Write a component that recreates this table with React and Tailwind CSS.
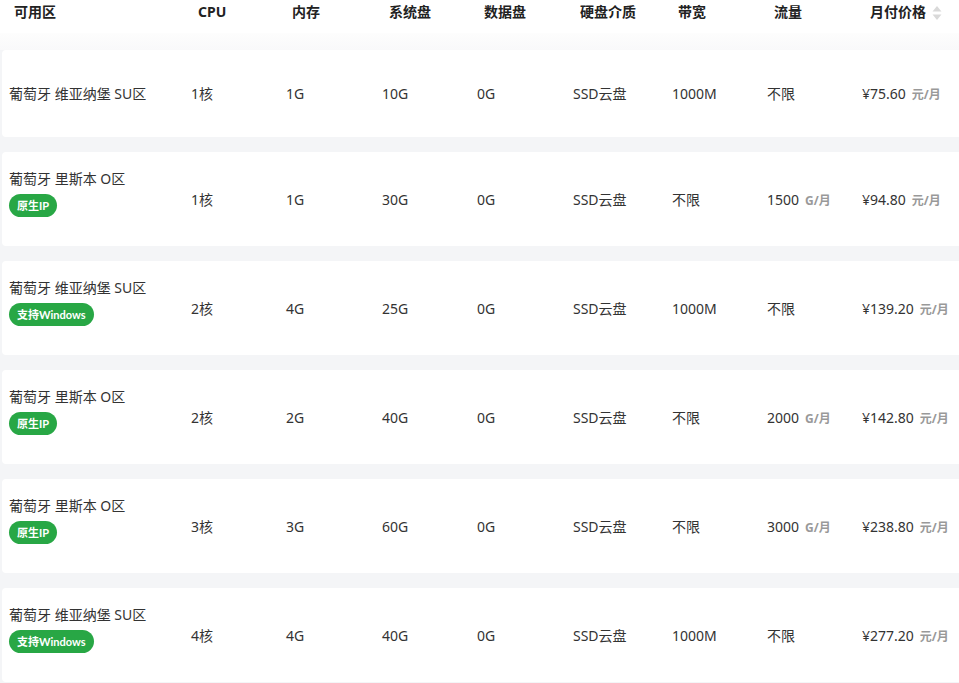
import React from "react";

const font = { fontFamily: '"Noto Sans", "Noto Sans CJK SC", sans-serif' };
const badgeFont = { fontFamily: 'Lato, "Noto Sans CJK SC", sans-serif' };

const rows = [
  { name: "葡萄牙 维亚纳堡 SU区", badge: null, cpu: "1核", mem: "1G", sys: "10G", data: "0G", disk: "SSD云盘", bw: "1000M", flow: "不限", flowUnit: false, price: "¥75.60" },
  { name: "葡萄牙 里斯本 O区", badge: "原生IP", cpu: "1核", mem: "1G", sys: "30G", data: "0G", disk: "SSD云盘", bw: "不限", flow: "1500", flowUnit: true, price: "¥94.80" },
  { name: "葡萄牙 维亚纳堡 SU区", badge: "支持Windows", cpu: "2核", mem: "4G", sys: "25G", data: "0G", disk: "SSD云盘", bw: "1000M", flow: "不限", flowUnit: false, price: "¥139.20" },
  { name: "葡萄牙 里斯本 O区", badge: "原生IP", cpu: "2核", mem: "2G", sys: "40G", data: "0G", disk: "SSD云盘", bw: "不限", flow: "2000", flowUnit: true, price: "¥142.80" },
  { name: "葡萄牙 里斯本 O区", badge: "原生IP", cpu: "3核", mem: "3G", sys: "60G", data: "0G", disk: "SSD云盘", bw: "不限", flow: "3000", flowUnit: true, price: "¥238.80" },
  { name: "葡萄牙 维亚纳堡 SU区", badge: "支持Windows", cpu: "4核", mem: "4G", sys: "40G", data: "0G", disk: "SSD云盘", bw: "1000M", flow: "不限", flowUnit: false, price: "¥277.20" },
];

function Unit({ children }) {
  return <span className="ml-[6px] text-[12px] font-bold text-[#999]">{children}</span>;
}

function Row({ r, first }) {
  return (
    <div
      className={`flex items-center bg-white rounded-[4px] ml-[2px] pl-[7px] text-[14px] text-[#333] ${first ? "h-[87px]" : "h-[94px]"}`}
    >
      <div className={`w-[182px] shrink-0 flex flex-col items-start ${r.badge ? "pb-[13px]" : ""}`}>
        <div className="leading-[20px]">{r.name}</div>
        {r.badge && (
          <div
            style={badgeFont}
            className="mt-[5px] h-[23px] px-[8px] rounded-full bg-[#28a745] text-white text-[11px] font-bold flex items-center leading-none"
          >
            {r.badge}
          </div>
        )}
      </div>
      <div className="w-[95px] shrink-0">{r.cpu}</div>
      <div className="w-[96px] shrink-0">{r.mem}</div>
      <div className="w-[95px] shrink-0">{r.sys}</div>
      <div className="w-[96px] shrink-0">{r.data}</div>
      <div className="w-[99px] shrink-0">{r.disk}</div>
      <div className="w-[95px] shrink-0">{r.bw}</div>
      <div className="w-[95px] shrink-0 flex items-baseline">
        <span>{r.flow}</span>
        {r.flowUnit && <Unit>G/月</Unit>}
      </div>
      <div className="w-[130px] shrink-0 flex items-baseline">
        <span>{r.price}</span>
        <Unit>元/月</Unit>
      </div>
    </div>
  );
}

export default function App() {
  return (
    <div style={font} className="w-[959px] h-[683px] overflow-hidden bg-[#f4f5f7]">
      <div className="w-[1000px]">
        <div className="h-[33px] bg-white flex items-start pt-[2px] pl-[14px] text-[14px] font-bold text-[#222] leading-[20px]">
          <div className="w-[184px] shrink-0">可用区</div>
          <div className="w-[94px] shrink-0">CPU</div>
          <div className="w-[97px] shrink-0">内存</div>
          <div className="w-[95px] shrink-0">系统盘</div>
          <div className="w-[96px] shrink-0">数据盘</div>
          <div className="w-[98px] shrink-0">硬盘介质</div>
          <div className="w-[96px] shrink-0">带宽</div>
          <div className="w-[96px] shrink-0">流量</div>
          <div className="shrink-0 flex items-center">
            <span>月付价格</span>
            <svg className="ml-[6px] mt-[1px]" width="10" height="16" viewBox="0 0 10 16">
              <path d="M5 1 L9.5 6.5 L0.5 6.5 Z" fill="#d9d9d9" />
              <path d="M5 15 L9.5 9.5 L0.5 9.5 Z" fill="#d9d9d9" />
            </svg>
          </div>
        </div>
        <div className="h-[17px] bg-gradient-to-b from-[#fdfdfd] to-[#f9f9fa]" />
        <div className="flex flex-col gap-[15px]">
          {rows.map((r, i) => (
            <Row key={i} r={r} first={i === 0} />
          ))}
        </div>
      </div>
    </div>
  );
}
